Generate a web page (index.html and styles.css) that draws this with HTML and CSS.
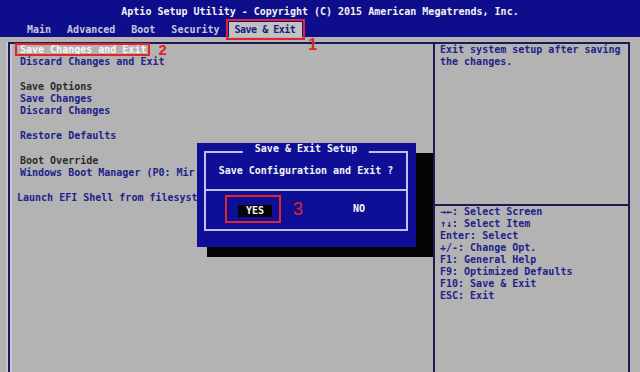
FILE: index.html
```html
<!DOCTYPE html>
<html lang="en">
<head>
    <meta charset="UTF-8">
    <meta name="viewport" content="width=device-width, initial-scale=1.0">
    <link rel="stylesheet" href="styles.css">
    <title>Aptio Setup Utility</title>
</head>
<body>
    <div class="header">
        <div class="title">Aptio Setup Utility - Copyright (C) 2015 American Megatrends, Inc.</div>
        <div class="tabs">
            <span class="tab">Main</span>
            <span class="tab">Advanced</span>
            <span class="tab">Boot</span>
            <span class="tab">Security</span>
            <span class="tab active">Save &amp; Exit<span class="step step-1">1</span></span>
        </div>
    </div>

    <div class="frame">
        <div class="menu">
            <div class="row"><span class="item selected">Save Changes and Exit</span><span class="step step-2">2</span></div>
            <div class="row item">Discard Changes and Exit</div>
            <div class="row"></div>
            <div class="row label">Save Options</div>
            <div class="row item">Save Changes</div>
            <div class="row item">Discard Changes</div>
            <div class="row"></div>
            <div class="row item">Restore Defaults</div>
            <div class="row"></div>
            <div class="row label">Boot Override</div>
            <div class="row item">Windows Boot Manager (P0: Mir</div>
            <div class="row"></div>
            <div class="row item outdent">Launch EFI Shell from filesyst</div>
        </div>

        <div class="side">
            <div class="help-text">
                Exit system setup after saving<br>
                the changes.
            </div>
            <div class="keys">
                <div>&rarr;&larr;: Select Screen</div>
                <div>&uarr;&darr;: Select Item</div>
                <div>Enter: Select</div>
                <div>+/-: Change Opt.</div>
                <div>F1: General Help</div>
                <div>F9: Optimized Defaults</div>
                <div>F10: Save &amp; Exit</div>
                <div>ESC: Exit</div>
            </div>
        </div>
    </div>

    <div class="dialog">
        <div class="dialog-frame">
            <span class="dialog-title">Save &amp; Exit Setup</span>
            <div class="dialog-message">Save Configuration and Exit ?</div>
            <div class="dialog-buttons">
                <span class="mark"><span class="btn btn-on">YES</span></span>
                <span class="step step-3">3</span>
                <span class="btn btn-no">NO</span>
            </div>
        </div>
    </div>
</body>
</html>
```

FILE: styles.css
```css
body {
    margin: 0;
    width: 640px;
    height: 372px;
    overflow: hidden;
    background-color: #b3b3b3;
    font-family: "DejaVu Sans Mono", "Liberation Mono", monospace;
    font-size: 10px;
    font-weight: bold;
}

.header {
    height: 37px;
    background-color: #0e0e8c;
    color: #f2f2f2;
}

.title {
    padding-top: 6px;
    line-height: 12px;
    text-align: center;
}

.tabs {
    display: flex;
    margin-top: 4px;
    padding-left: 19px;
    color: #c8c8d8;
}

.tab {
    position: relative;
    padding: 0 8px;
    line-height: 15px;
}

.tab.active {
    margin-left: 1px;
    padding: 0 7px 0 6px;
    letter-spacing: -0.5px;
    background-color: #c2c2c2;
    color: #1c1c7c;
    outline: 2px solid #e0262a;
    outline-offset: 1px;
}

.step {
    font-family: "Liberation Sans", Arial, sans-serif;
    color: #e0262a;
}

.step-1 {
    position: absolute;
    left: calc(100% + 6px);
    top: 15px;
    font-size: 16px;
    line-height: 16px;
    letter-spacing: 0;
}

.step-2 {
    display: inline-block;
    vertical-align: top;
    margin: -1px 0 0 9px;
    font-size: 15px;
    line-height: 14px;
}

.step-3 {
    margin-left: 12px;
    font-size: 18px;
    line-height: 18px;
    font-weight: normal;
}

.frame {
    display: grid;
    grid-template-columns: 425px 1fr;
    height: 328px;
    margin: 5px 10px 0 8px;
    border: 2px solid #1c1c52;
    border-bottom: none;
    box-shadow: -2px 0 0 #c6c6da, inset 2px 0 0 #c6c6da;
}

.menu {
    border-right: 2px solid #1c1c52;
    padding-left: 10px;
    white-space: nowrap;
}

.row {
    height: 12.3px;
    line-height: 12.3px;
}

.item {
    color: #22228a;
}

.label {
    color: #2c2c2c;
}

.outdent {
    margin-left: -3px;
}

.item.selected {
    margin-left: -4px;
    padding: 0 3px 0 4px;
    color: #f6f6f6;
    outline: 2px solid #e0262a;
    outline-offset: -1px;
}

.side {
    padding-left: 5px;
    margin-left: -5px;
    color: #22228a;
}

.help-text {
    height: 160px;
    padding-left: 5px;
    line-height: 12.3px;
}

.keys {
    border-top: 2px solid #1c1c52;
    margin-left: -5px;
    padding-left: 10px;
    line-height: 12px;
}

.dialog {
    position: absolute;
    left: 197px;
    top: 143px;
    width: 219px;
    height: 104px;
    box-sizing: border-box;
    padding: 8px 8px 16px 7px;
    background-color: #0e0e96;
    color: #f4f4f4;
    box-shadow: 10px 10px 0 #050505, 17px 10px 0 #050505;
}

.dialog-frame {
    position: relative;
    height: 100%;
    box-sizing: border-box;
    border: 2px solid #c0c0ee;
}

.dialog-title {
    position: absolute;
    left: 50%;
    top: -10px;
    transform: translateX(-50%);
    padding: 0 12px;
    line-height: 12px;
    white-space: nowrap;
    background-color: #0e0e96;
}

.dialog-message {
    height: 36px;
    line-height: 36px;
    text-align: center;
}

.dialog-buttons {
    display: flex;
    align-items: center;
    height: 38px;
    border-top: 2px solid #c0c0ee;
    padding-left: 19px;
    box-sizing: border-box;
}

.mark {
    padding: 8px 7px 4px 11px;
    border: 2px solid #e0262a;
}

.btn {
    display: inline-block;
    line-height: 12px;
}

.btn-on {
    width: 34px;
    text-align: center;
    background-color: #050505;
}

.btn-no {
    margin-left: 50px;
}
```
